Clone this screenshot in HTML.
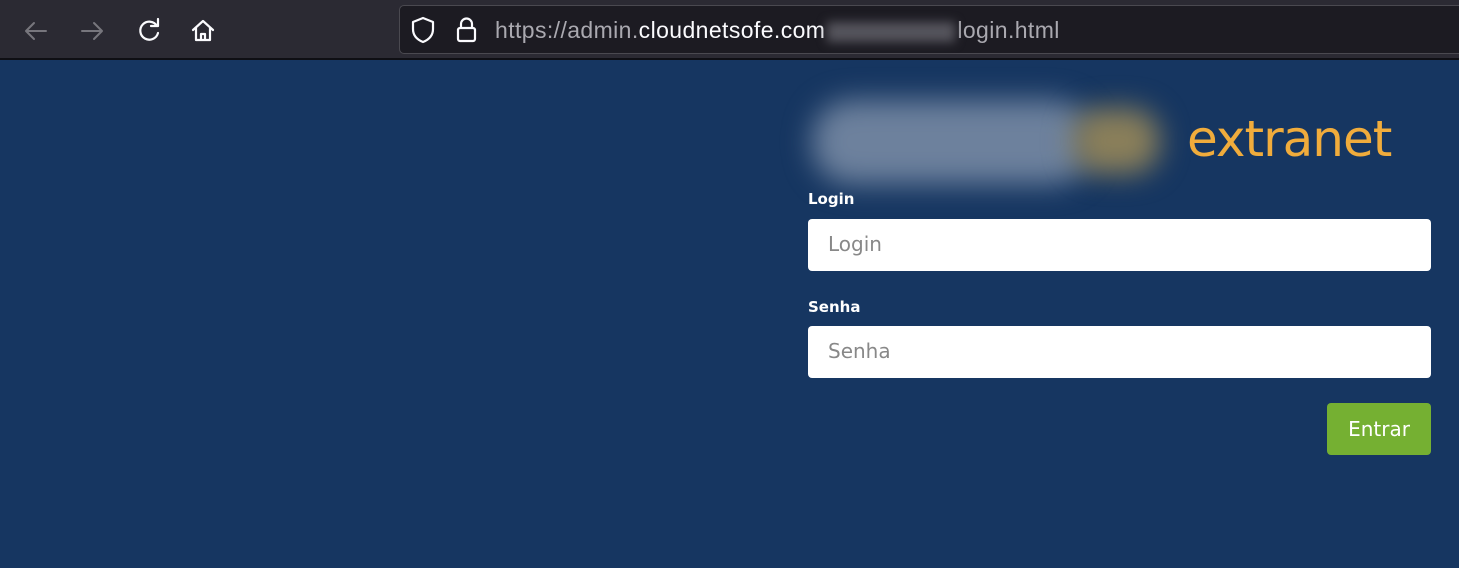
<!DOCTYPE html>
<html><head><style>
*{margin:0;padding:0;box-sizing:border-box}
body{width:1459px;height:568px;overflow:hidden;background:#163661;font-family:"DejaVu Sans","Liberation Sans",sans-serif;position:relative}
.tb{position:absolute;left:0;top:0;width:1459px;height:60px;background:#2b2a33;border-bottom:2px solid #0f0f14}
.url{position:absolute;left:399px;top:5px;width:1070px;height:49px;background:#1c1b22;border:1px solid #4a4950;border-radius:5px}
.urlt{position:absolute;left:495px;top:17px;font-size:23px;color:#aaa9b0;letter-spacing:0.4px;font-family:"Liberation Sans",sans-serif;white-space:nowrap}
.urlt b{font-weight:normal;color:#fbfbfe}
.lbl{position:absolute;left:808px;font-size:15px;font-weight:bold;color:#fff}
.inp{position:absolute;left:808px;width:623px;height:52px;background:#fff;border-radius:4px;font-size:20px;color:#888;padding:13px 20px}
.btn{position:absolute;left:1327px;top:403px;width:104px;height:52px;background:#75b032;border-radius:4px;color:#fff;font-size:20px;text-align:center;line-height:52px}
</style></head><body>
<div class="tb">
<svg style="position:absolute;left:0;top:0" width="240" height="60" fill="none" stroke-linecap="round" stroke-linejoin="round">
<path d="M46 31H26M34 23l-8 8 8 8" stroke="#77767d" stroke-width="2"/>
<path d="M82 31h20M94 23l8 8-8 8" stroke="#77767d" stroke-width="2"/>
<path d="M157 26a9 9 0 1 0 1 7M158 19v7h-7" stroke="#fbfbfe" stroke-width="2.2"/>
<path d="M193 30l10-9 10 9M196 28v12h14V28M201 40v-6h4v6" stroke="#fbfbfe" stroke-width="2.2"/>
</svg>
</div>
<div class="url"></div>
<svg style="position:absolute;left:405px;top:14px" width="80" height="34" fill="none" stroke="#fbfbfe" stroke-width="2.2" stroke-linejoin="round">
<path d="M18 4l10 4v7c0 7-5 11-10 13-5-2-10-6-10-13V8z"/>
<rect x="53" y="14" width="17" height="13" rx="2"/><path d="M56 14v-4a5.5 5.5 0 0 1 11 0v4"/>
</svg>
<div class="urlt">https://admin.<b>cloudnetsofe.com</b><span style="display:inline-block;width:128px;height:20px;background:#55545c;filter:blur(5px);vertical-align:middle;margin:0 2px"></span>login.html</div>
<div style="position:absolute;left:812px;top:100px;width:280px;height:84px;background:#6d819d;border-radius:40px;filter:blur(14px)"></div>
<div style="position:absolute;left:1072px;top:108px;width:88px;height:66px;background:#8a7f5a;border-radius:30px;filter:blur(14px)"></div>
<div style="position:absolute;left:1187px;top:110px;font-size:50px;color:#f0ac3c;font-family:'DejaVu Sans',sans-serif;letter-spacing:-1px">extranet</div>
<div class="lbl" style="top:190px">Login</div>
<div class="inp" style="top:219px">Login</div>
<div class="lbl" style="top:298px">Senha</div>
<div class="inp" style="top:326px">Senha</div>
<div class="btn">Entrar</div>
</body></html>
